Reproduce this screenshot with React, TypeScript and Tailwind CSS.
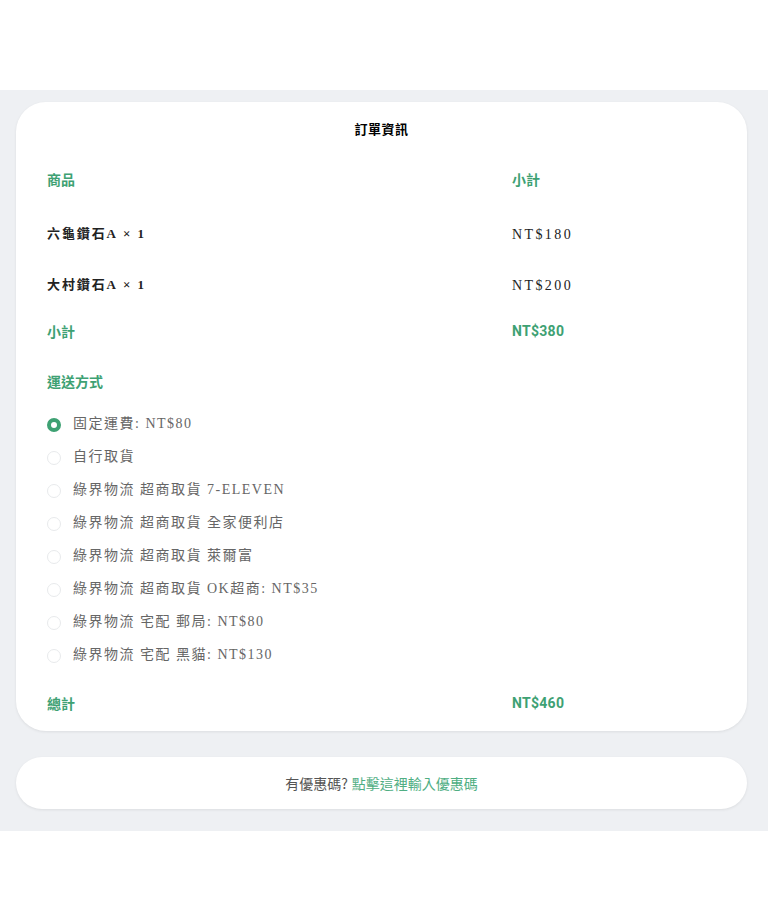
import React from "react";

const serif = { fontFamily: '"Liberation Serif", "Noto Sans CJK TC", serif' };

const options = [
  "固定運費: NT$80",
  "自行取貨",
  "綠界物流 超商取貨 7-ELEVEN",
  "綠界物流 超商取貨 全家便利店",
  "綠界物流 超商取貨 萊爾富",
  "綠界物流 超商取貨 OK超商: NT$35",
  "綠界物流 宅配 郵局: NT$80",
  "綠界物流 宅配 黑貓: NT$130",
];

export default function App() {
  return (
    <div className="w-[768px] min-h-[922px] bg-white font-['Noto_Sans_CJK_TC','Noto_Sans',sans-serif]">
      <div className="h-[90px] bg-white" />
      <div className="bg-[#eef0f3] pt-3 pb-[22px] pl-4 pr-[21px]">
        <div className="bg-white rounded-[30px] shadow-[0_1px_3px_rgba(0,0,0,0.08)] px-[31px] pt-[20px]">
          <div
            className="text-center text-[13px] leading-4 font-bold text-black h-4 tracking-[0.5px]"
            style={serif}
          >
            訂單資訊
          </div>
          <div className="mt-[16px] grid grid-cols-[465px_1fr]">
            <div className="h-[50px] flex items-center text-[14px] font-bold text-[#3ea173]">商品</div>
            <div className="h-[50px] flex items-center text-[14px] font-bold text-[#3ea173]">小計</div>

            <div className="h-[60px] flex items-center text-[13px] font-bold text-[#222] tracking-[1.9px]" style={serif}>
              六龜鑽石A&nbsp;× 1
            </div>
            <div className="h-[60px] flex items-center text-[14px] text-[#222] tracking-[2.4px]" style={serif}>
              NT$180
            </div>

            <div className="h-[42px] flex items-center text-[13px] font-bold text-[#222] tracking-[1.9px]" style={serif}>
              大村鑽石A&nbsp;× 1
            </div>
            <div className="h-[42px] flex items-center text-[14px] text-[#222] tracking-[2.4px]" style={serif}>
              NT$200
            </div>

            <div className="h-[50px] flex items-center text-[14px] font-bold text-[#3ea173]">小計</div>
            <div className="h-[50px] flex items-center text-[14px] font-bold text-[#3ea173] font-['Roboto',sans-serif] tracking-[0.3px]">NT$380</div>
          </div>
          <div className="h-[51px] flex items-center text-[14px] font-bold text-[#3ea173]">運送方式</div>
          <div className="flex flex-col">
            {options.map((o, i) => (
              <label key={i} className="h-[33px] flex items-center gap-[12px]">
                {i === 0 ? (
                  <span className="mt-[3px] w-[14px] h-[14px] rounded-full border-[4px] border-[#3ea173] bg-white shrink-0" />
                ) : (
                  <span className="mt-[3px] w-[14px] h-[14px] rounded-full border border-[#e8eaec] bg-white shrink-0" />
                )}
                <span className="text-[14px] text-[#666] tracking-[1.5px]" style={serif}>
                  {o}
                </span>
              </label>
            ))}
          </div>
          <div className="mt-[5px] h-[55px] grid grid-cols-[465px_1fr] items-center">
            <div className="text-[14px] font-bold text-[#3ea173]">總計</div>
            <div className="text-[14px] font-bold text-[#3ea173] font-['Roboto',sans-serif] tracking-[0.3px]">NT$460</div>
          </div>
        </div>
        <div className="mt-[26px] h-[52px] bg-white rounded-[26px] shadow-[0_1px_3px_rgba(0,0,0,0.08)] flex items-center justify-center text-[14px]">
          <span className="text-[#555]">有優惠碼?</span>
          <span className="text-[#4fae83] ml-1">點擊這裡輸入優惠碼</span>
        </div>
      </div>
    </div>
  );
}
